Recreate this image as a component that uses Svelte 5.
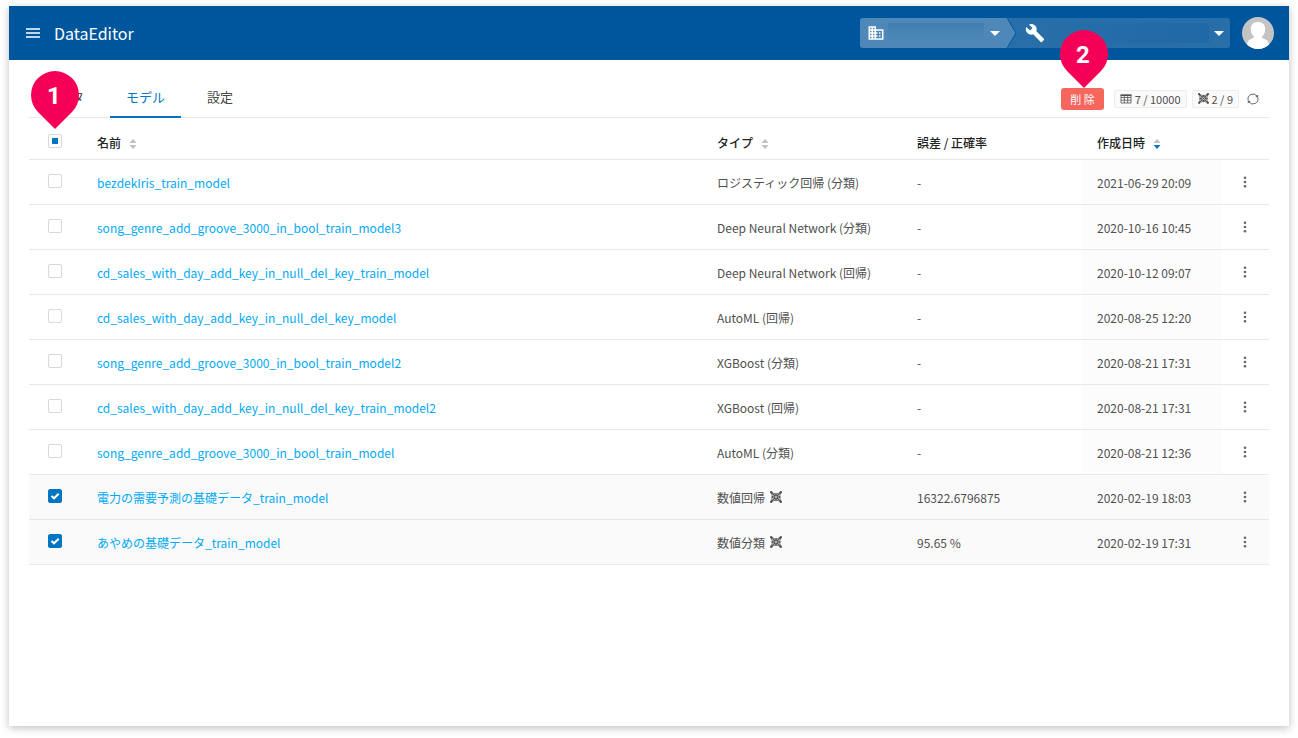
<script>
  let rows = $state([
    { name: 'bezdekIris_train_model', type: 'ロジスティック回帰 (分類)', score: '-', date: '2021-06-29 20:09', checked: false },
    { name: 'song_genre_add_groove_3000_in_bool_train_model3', type: 'Deep Neural Network (分類)', score: '-', date: '2020-10-16 10:45', checked: false },
    { name: 'cd_sales_with_day_add_key_in_null_del_key_train_model', type: 'Deep Neural Network (回帰)', score: '-', date: '2020-10-12 09:07', checked: false },
    { name: 'cd_sales_with_day_add_key_in_null_del_key_model', type: 'AutoML (回帰)', score: '-', date: '2020-08-25 12:20', checked: false },
    { name: 'song_genre_add_groove_3000_in_bool_train_model2', type: 'XGBoost (分類)', score: '-', date: '2020-08-21 17:31', checked: false },
    { name: 'cd_sales_with_day_add_key_in_null_del_key_train_model2', type: 'XGBoost (回帰)', score: '-', date: '2020-08-21 17:31', checked: false },
    { name: 'song_genre_add_groove_3000_in_bool_train_model', type: 'AutoML (分類)', score: '-', date: '2020-08-21 12:36', checked: false },
    { name: '電力の需要予測の基礎データ_train_model', type: '数値回帰', net: true, score: '16322.6796875', date: '2020-02-19 18:03', checked: true },
    { name: 'あやめの基礎データ_train_model', type: '数値分類', net: true, score: '95.65 %', date: '2020-02-19 17:31', checked: true },
  ]);
  let count = $derived(rows.filter((r) => r.checked).length);
  let all = $derived(count === rows.length);
  let some = $derived(count > 0 && !all);

  function toggleAll(e) {
    const on = e.currentTarget.checked;
    for (const r of rows) r.checked = on;
  }
</script>

{#snippet netIcon()}
  <svg class="net" viewBox="0 0 12 12" aria-hidden="true">
    <g fill="none" stroke="currentColor">
      <path d="M1 1.2 4.500 4.600M7.500 7.400 11 10.800M11 1.200 7.500 4.600M4.500 7.400 1 10.800" stroke-width="1.2" />
      <path d="M1 1.200 6 3.200 11 1.200M1 10.800 6 8.800 11 10.800M2.500 6 1.200 1.200M2.500 6 1.200 10.800M9.500 6 10.800 1.200M9.500 6 10.800 10.800" stroke-width="0.7" />
      <circle cx="6" cy="6" r="2" stroke-width="1.300" />
    </g>
    <g fill="currentColor">
      <circle cx="1.2" cy="1.300" r="1.200" /><circle cx="10.800" cy="1.300" r="1.200" />
      <circle cx="1.200" cy="10.700" r="1.200" /><circle cx="10.800" cy="10.700" r="1.200" />
      <circle cx="2.400" cy="6" r="1" /><circle cx="9.600" cy="6" r="1" />
      <circle cx="6" cy="2.800" r="0.800" /><circle cx="6" cy="9.200" r="0.800" />
      <circle cx="6" cy="6" r="0.800" />
    </g>
  </svg>
{/snippet}

{#snippet sorter(dir)}
  <svg class="sorter" viewBox="0 0 8 12" aria-hidden="true">
    <path d="M4 1 7.5 5H.5Z" fill="#bfbfbf" />
    <path d="M4 11 7.5 7H.5Z" fill={dir === 'desc' ? '#0075c2' : '#bfbfbf'} />
  </svg>
{/snippet}

{#snippet pin(n)}
  <svg class="pin pin{n}" viewBox="0 0 48 58" aria-hidden="true">
    <path d="M24 58 7 41A24 24 0 1 1 41 41Z" fill="#f50057" />
    <text x="23" y="33" text-anchor="middle">{n}</text>
  </svg>
{/snippet}

<div class="card">
  <header>
    <button class="plain menu" aria-label="メニュー">
      <svg viewBox="0 0 14 10"><path d="M0 1H14M0 5H14M0 9H14" stroke="#fff" stroke-width="1.6" /></svg>
    </button>
    <h1>DataEditor</h1>
    <nav class="scope">
      <button class="plain org" aria-label="組織">
        <svg width="18" height="18" viewBox="0 0 24 24" fill="#fff"><path d="M12 7V3H2v18h20V7H12zM6 19H4v-2h2v2zm0-4H4v-2h2v2zm0-4H4V9h2v2zm0-4H4V5h2v2zm4 12H8v-2h2v2zm0-4H8v-2h2v2zm0-4H8V9h2v2zm0-4H8V5h2v2zm10 12h-8v-2h2v-2h-2v-2h2v-2h-2V9h8v10zm-2-8h-2v2h2v-2zm0 4h-2v2h2v-2z" /></svg>
        <span class="mask"></span>
        <i class="caret"></i>
      </button>
      <svg class="chevron" viewBox="0 0 10 30" aria-hidden="true">
        <path d="M0 0H10V30H0Z" fill="#286fa9" />
        <path d="M0 0 9 15 0 30Z" fill="#4d88b8" />
        <path d="M0 0 9 15 0 30" fill="none" stroke="#00569c" />
      </svg>
      <button class="plain project" aria-label="プロジェクト">
        <svg width="20" height="20" viewBox="0 0 24 24" fill="#fff"><path d="M22.7 19l-9.1-9.1c.9-2.3.4-5-1.5-6.9-2-2-5-2.4-7.4-1.3L9 6 6 9 1.6 4.7C.4 7.1.9 10.1 2.9 12.1c1.9 1.9 4.6 2.4 6.9 1.5l9.1 9.1c.4.4 1 .4 1.4 0l2.3-2.3c.5-.4.5-1.1.1-1.4z" /></svg>
        <span class="mask"></span>
        <i class="caret"></i>
      </button>
    </nav>
    <button class="plain avatar" aria-label="アカウント">
      <svg viewBox="0 0 32 32">
        <clipPath id="round"><circle cx="16" cy="16" r="16" /></clipPath>
        <g clip-path="url(#round)">
          <path d="M0 0H32V32H0Z" fill="#c4c4c4" />
          <path d="M16 5c5 0 7.500 3.500 7.200 8-.2 3-1.500 5-3.200 6.500 0 1.500 1 2 3 2.700 3 1 4 3 4.500 9.800H4.500C5 25 6 23 9 22c2-.7 3-1 3-2.500C10.300 18 9 16 8.800 13 8.500 8.500 11 5 16 5Z" fill="#fff" />
        </g>
      </svg>
    </button>
  </header>

  <main>
    <div class="bar">
      <nav class="tabs">
        <a href="#data">データ</a>
        <a href="#model" class="on" aria-current="page">モデル</a>
        <a href="#settings">設定</a>
      </nav>
      <div class="tools">
        <button class="delete">削 除</button>
        <span class="tag">
          <svg width="12" height="10" viewBox="0 0 12 10"><path d="M1 1H11V9H1ZM1 3.500H11M1 6.200H11M4.300 1V9M7.700 1V9" fill="none" stroke="currentColor" stroke-width="0.8" /><path d="M.5 .5H11.500V2H.5Z" fill="currentColor" /></svg>
          7 / 10000
        </span>
        <span class="tag">{@render netIcon()} 2 / 9</span>
        <button class="plain reload" aria-label="再読み込み">
          <svg viewBox="0 0 12 12"><path d="M1.200 7.300A5 5 0 0 1 10 3M10.800 4.700A5 5 0 0 1 2 9" fill="none" stroke="#666" /><path d="M11.200 1.500V4.500L8.300 4ZM.8 10.500V7.500L3.700 8Z" fill="#666" /></svg>
        </button>
      </div>
    </div>

    <table>
      <colgroup><col class="c-check" /><col /><col class="c-type" /><col class="c-score" /><col class="c-date" /><col class="c-more" /></colgroup>
      <thead>
        <tr>
          <th class="check"><input type="checkbox" aria-label="すべて選択" checked={all} indeterminate={some} onchange={toggleAll} /></th>
          <th>名前{@render sorter()}</th>
          <th>タイプ{@render sorter()}</th>
          <th>誤差 / 正確率</th>
          <th>作成日時{@render sorter('desc')}</th>
          <th></th>
        </tr>
      </thead>
      <tbody>
        {#each rows as row}
          <tr class:selected={row.checked}>
            <td class="check"><input type="checkbox" aria-label={row.name} bind:checked={row.checked} /></td>
            <td><a href="#detail">{row.name}</a></td>
            <td>{row.type}{#if row.net}{@render netIcon()}{/if}</td>
            <td>{row.score}</td>
            <td class="sorted">{row.date}</td>
            <td class="more">
              <button class="plain" aria-label="操作">
                <svg viewBox="0 0 4 12" fill="#666"><circle cx="2" cy="1.700" r="1.300" /><circle cx="2" cy="6" r="1.300" /><circle cx="2" cy="10.300" r="1.300" /></svg>
              </button>
            </td>
          </tr>
        {/each}
      </tbody>
    </table>
  </main>
  {@render pin(1)}
  {@render pin(2)}
</div>

<style>
  :global(body) {
    background: #fff;
  }
  .card {
    position: relative;
    box-sizing: border-box;
    min-height: calc(100vh - 18px);
    margin: 6px 9px 12px;
    background: #fff;
    box-shadow: 0 2px 8px rgba(0, 0, 0, 0.25);
    color: #505050;
    font: 12px/20px 'Noto Sans CJK JP', sans-serif;
  }
  svg {
    display: block;
  }
  .plain {
    padding: 0;
    border: 0;
    background: none;
    cursor: pointer;
  }
  header {
    display: flex;
    align-items: center;
    height: 54px;
    padding: 0 15px 0 17px;
    background: #00569c;
  }
  .menu svg {
    width: 14px;
    height: 10px;
  }
  h1 {
    flex: 1;
    margin: 0 0 0 14px;
    color: #fff;
    font-size: 16px;
    font-weight: 400;
    line-height: 24px;
  }
  .scope {
    display: flex;
    height: 30px;
  }
  .org,
  .project {
    display: flex;
    align-items: center;
  }
  .org {
    width: 147px;
    padding: 0 7px;
    gap: 3px;
    border-radius: 3px 0 0 3px;
    background: #4d88b8;
  }
  .chevron {
    width: 10px;
    height: 30px;
  }
  .project {
    width: 213px;
    padding: 0 6px 0 8px;
    gap: 2px;
    border-radius: 0 3px 3px 0;
    background: #286fa9;
  }
  .mask {
    flex: 1;
    height: 20px;
    background: linear-gradient(#427fb1, #4d88b8);
  }
  .project .mask {
    background: linear-gradient(90deg, #286fa9, #1f69a6);
  }
  .caret {
    margin-left: 3px;
    border: 5px solid transparent;
    border-top-color: #fff;
    border-bottom: 0;
  }
  .avatar {
    margin-left: 12px;
  }
  .avatar svg {
    width: 32px;
    height: 32px;
  }
  main {
    padding: 20px;
  }
  .bar {
    display: flex;
    align-items: center;
    justify-content: space-between;
    height: 37px;
    border-bottom: 1px solid #e8e8e8;
  }
  .tabs {
    display: flex;
    gap: 10px;
    align-self: stretch;
  }
  .tabs a {
    height: 36px;
    padding: 0 16px;
    border-bottom: 2px solid transparent;
    color: #474747;
    font-size: 13px;
    line-height: 33px;
    text-decoration: none;
  }
  .tabs .on {
    border-color: #0075c2;
    color: #0075c2;
  }
  .tools {
    display: flex;
    align-items: center;
    padding-right: 10px;
  }
  .delete {
    height: 22px;
    margin-right: 10px;
    padding: 0 9px;
    border: 0;
    border-radius: 3px;
    background: #f5665d;
    color: #fff;
    font: 11px/22px 'Noto Sans CJK JP', sans-serif;
  }
  .tag {
    display: flex;
    align-items: center;
    gap: 3px;
    height: 16px;
    margin-right: 5px;
    padding: 0 5px;
    border: 1px solid #ededed;
    border-radius: 2px;
    background: #fafafa;
    font-size: 11px;
  }
  .reload {
    margin-left: 3px;
  }
  .reload svg,
  .net {
    width: 12px;
    height: 12px;
  }
  .tag .net {
    width: 11px;
    height: 11px;
  }
  table {
    width: 100%;
    border-collapse: collapse;
    table-layout: fixed;
  }
  .c-check {
    width: 52px;
  }
  .c-type {
    width: 200px;
  }
  .c-score {
    width: 180px;
  }
  .c-date {
    width: 140px;
  }
  .c-more {
    width: 48px;
  }
  th,
  td {
    box-sizing: border-box;
    height: 45px;
    padding: 2px 16px 0;
    border-bottom: 1px solid #e8e8e8;
    text-align: left;
    white-space: nowrap;
  }
  th {
    height: 41px;
    padding-top: 10px;
    color: #222;
    font-weight: 500;
  }
  .sorter {
    display: inline-block;
    width: 8px;
    height: 12px;
    margin-left: 8px;
    vertical-align: -2px;
  }
  td .net {
    display: inline-block;
    margin-left: 5px;
    vertical-align: 0;
  }
  td a {
    color: #03a9f4;
    text-decoration: none;
  }
  .sorted {
    background: #fcfcfc;
  }
  .selected td {
    background: #fafafa;
  }
  .check {
    padding: 0 19px 2px;
  }
  th.check {
    padding-top: 8px;
  }
  input {
    display: block;
    box-sizing: border-box;
    appearance: none;
    width: 14px;
    height: 14px;
    margin: 0;
    border: 1px solid #d9d9d9;
    border-radius: 2px;
    background: #fff center / 100% no-repeat;
  }
  input:checked {
    border-color: #0075c2;
    background-color: #0075c2;
    background-image: url("data:image/svg+xml,%3Csvg xmlns='http://www.w3.org/2000/svg' viewBox='0 0 12 12'%3E%3Cpath d='M2.500 6 5 8.300 9.700 3.700' fill='none' stroke='white' stroke-width='2'/%3E%3C/svg%3E");
  }
  input:indeterminate {
    background-image: linear-gradient(#0075c2, #0075c2);
    background-size: 6px 6px;
  }
  .more {
    padding: 2px 22px 0;
  }
  .more svg {
    width: 4px;
    height: 12px;
  }
  .pin {
    position: absolute;
    width: 48px;
    height: 58px;
  }
  .pin text {
    fill: #fff;
    font: 700 24px Roboto, sans-serif;
  }
  .pin1 {
    top: 65px;
    left: 22px;
  }
  .pin2 {
    top: 24px;
    right: 181px;
  }
</style>
